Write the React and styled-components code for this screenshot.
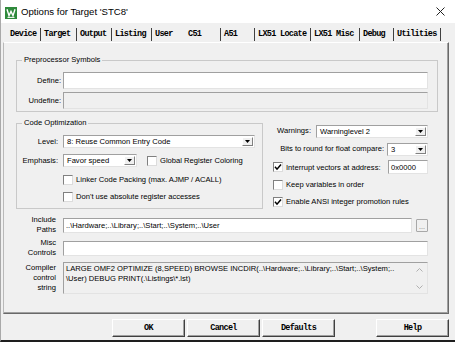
import React from "react";
import styled, { createGlobalStyle } from "styled-components";

const SANS = `"Liberation Sans", Arial, sans-serif`;
const MONO = `"Liberation Mono", "Courier New", monospace`;

const GlobalStyle = createGlobalStyle`
  html, body {
    margin: 0;
    padding: 0;
    background: #f0f0f0;
  }
  body {
    font-family: ${SANS};
    font-size: 7.6px;
    color: #000;
  }
`;

const Window = styled.div`
  width: 455px;
  height: 342px;
  box-sizing: border-box;
  border-left: 1px solid #a9a9a9;
  border-bottom: 2px solid #1e1e1e;
  background: #f0f0f0;
  display: flex;
  flex-direction: column;
  overflow: hidden;
`;

const TitleBar = styled.div`
  flex: none;
  height: 23px;
  background: #ffffff;
  display: flex;
  align-items: center;
  padding-left: 4px;
`;

const TitleText = styled.span`
  margin-left: 4px;
  font-family: ${SANS};
  font-size: 9.6px;
  color: #000;
`;

const CloseButton = styled.div`
  margin-left: auto;
  margin-right: 10px;
  width: 9px;
  height: 9px;
  display: flex;
`;

const TabStrip = styled.div`
  flex: none;
  height: 19px;
  box-sizing: border-box;
  display: flex;
  align-items: flex-end;
  padding: 0 0 1px 6px;
`;

const Tab = styled.div`
  flex: none;
  width: ${(p) => p.$w}px;
  height: 13px;
  box-sizing: border-box;
  padding-left: ${(p) => (p.$active ? 8 : 3)}px;
  border-right: 1px solid ${(p) => (p.$sep ? "#404040" : "transparent")};
  font-family: ${MONO};
  font-weight: bold;
  font-size: 8.5px;
  letter-spacing: -0.7px;
  line-height: 13px;
  white-space: nowrap;
  color: #000;
`;

const Panel = styled.div`
  flex: none;
  margin-left: 2px;
  width: 446px;
  height: 272px;
  box-sizing: border-box;
  border-left: 1px solid #b9b9b9;
  border-top: 1px solid #ffffff;
  border-right: 1px solid #696969;
  border-bottom: 1px solid #696969;
  box-shadow: inset -1px -1px 0 #a0a0a0;
  display: flex;
  flex-direction: column;
`;

const GroupBox = styled.fieldset`
  margin: 0;
  width: ${(p) => p.$w}px;
  min-width: 0;
  box-sizing: border-box;
  padding: 7px ${(p) => p.$pr || 0}px ${(p) => p.$pb || 2}px 0;
  border: 1px solid #c9c9c9;
  flex: none;
`;

const Legend = styled.legend`
  padding: 0 2px;
  margin-left: 5px;
  line-height: 10px;
  font-size: 7.6px;
`;

const Preprocessor = styled(GroupBox)`
  margin: 12px 0 0 12px;
`;

const Row = styled.div`
  display: flex;
  align-items: center;
  height: ${(p) => p.$h}px;
  margin-top: ${(p) => p.$mt || 0}px;
  padding-left: ${(p) => p.$pl || 0}px;
`;

const Label = styled.div`
  flex: none;
  width: ${(p) => p.$w}px;
  margin-right: ${(p) => p.$gap}px;
  text-align: right;
  line-height: 10px;
  white-space: nowrap;
`;

const TextBox = styled.div`
  flex: ${(p) => (p.$w ? "none" : "1")};
  width: ${(p) => (p.$w ? `${p.$w}px` : "auto")};
  height: ${(p) => p.$h}px;
  margin-left: ${(p) => (p.$push ? "auto" : "0")};
  box-sizing: border-box;
  background: ${(p) => (p.$disabled ? "#f0f0f0" : "#ffffff")};
  border-top: 1px solid #a0a0a0;
  border-left: 1px solid #a0a0a0;
  border-right: 1px solid #e3e3e3;
  border-bottom: 1px solid #e3e3e3;
  padding-left: 2px;
  display: flex;
  align-items: center;
  white-space: nowrap;
  overflow: hidden;
`;

const Middle = styled.div`
  display: flex;
  align-items: flex-start;
  margin: 6px 0 0 12px;
`;

const ComboBox = styled.div`
  flex: none;
  width: ${(p) => p.$w}px;
  height: 13px;
  box-sizing: border-box;
  background: #ffffff;
  border-top: 1px solid #a0a0a0;
  border-left: 1px solid #a0a0a0;
  border-right: 1px solid #e3e3e3;
  border-bottom: 1px solid #e3e3e3;
  display: flex;
  align-items: center;
`;

const ComboText = styled.span`
  flex: 1;
  padding-left: 3px;
  white-space: nowrap;
  overflow: hidden;
`;

const DropButton = styled.span`
  flex: none;
  width: 11px;
  height: 9px;
  margin-right: 1px;
  box-sizing: border-box;
  background: #f0f0f0;
  border-top: 1px solid #ffffff;
  border-left: 1px solid #ffffff;
  border-right: 1px solid #808080;
  border-bottom: 1px solid #808080;
  display: flex;
  align-items: center;
  justify-content: center;
`;

const CheckItem = styled.div`
  display: flex;
  align-items: center;
  margin-left: ${(p) => p.$ml || 0}px;
  white-space: nowrap;
`;

const Box = styled.span`
  flex: none;
  width: 10px;
  height: 10px;
  box-sizing: border-box;
  background: #ffffff;
  border-top: 1px solid #808080;
  border-left: 1px solid #808080;
  border-right: 1px solid #dcdcdc;
  border-bottom: 1px solid #dcdcdc;
  margin-right: 3px;
  display: flex;
  align-items: center;
  justify-content: center;
`;

const RightColumn = styled.div`
  flex: 1;
  padding: 4px 20px 0 10px;
  display: flex;
  flex-direction: column;
`;

const RightRow = styled.div`
  height: ${(p) => p.$h}px;
  display: flex;
  align-items: center;
  justify-content: ${(p) => (p.$end ? "flex-end" : "flex-start")};
`;

const Bottom = styled.div`
  margin: 5px 20px 0 12px;
  display: flex;
  flex-direction: column;
`;

const BrowseButton = styled.div`
  flex: none;
  width: 12px;
  height: 13px;
  margin-left: 4px;
  box-sizing: border-box;
  background: #f0f0f0;
  border: 1px solid #a8a8a8;
  border-radius: 1px;
  color: #707070;
  font-size: 7px;
  line-height: 13px;
  text-align: center;
`;

const ControlText = styled.div`
  flex: 1;
  align-self: flex-start;
  padding-top: 1px;
  line-height: 10px;
  white-space: nowrap;
`;

const ScrollTrack = styled.div`
  flex: none;
  width: 15px;
  align-self: stretch;
  display: flex;
  flex-direction: column;
  align-items: center;
  justify-content: space-between;
  padding: 5px 0 4px;
  box-sizing: border-box;
`;

const Footer = styled.div`
  flex: 1;
  display: flex;
  align-items: flex-start;
  gap: 2px;
  padding: 5px 6px 0 111px;
`;

const DialogButton = styled.div`
  width: 73px;
  height: 18px;
  margin-left: ${(p) => (p.$apart ? "auto" : "0")};
  box-sizing: border-box;
  background: #f0f0f0;
  border-top: 1px solid #ffffff;
  border-left: 1px solid #ffffff;
  border-right: 1px solid #404040;
  border-bottom: 1px solid #404040;
  box-shadow: inset -1px -1px 0 #a0a0a0;
  display: flex;
  align-items: center;
  justify-content: center;
  font-family: ${MONO};
  font-weight: bold;
  font-size: 8.5px;
  letter-spacing: -0.7px;
`;

const tabs = [
  { name: "Device", w: 34, sep: true },
  { name: "Target", w: 36, sep: true },
  { name: "Output", w: 35, sep: true },
  { name: "Listing", w: 40, sep: true },
  { name: "User", w: 28, sep: false },
  { name: "C51", w: 41, sep: true, active: true },
  { name: "A51", w: 34, sep: true },
  { name: "LX51 Locate", w: 56, sep: true },
  { name: "LX51 Misc", w: 49, sep: true },
  { name: "Debug", w: 34, sep: true },
  { name: "Utilities", w: 47, sep: true },
];

const AppIcon = () => (
  <svg width="12" height="12" viewBox="0 0 12 12" style={{ marginTop: 2 }}>
    <rect width="12" height="12" fill="#2f8a3c" />
    <path d="M2 2.2 L4 8.6 L6 4.4 L8 8.6 L10 2.2" stroke="#fff" strokeWidth="1.4" fill="none" />
    <path d="M2.5 10.4 H9.5" stroke="#fff" strokeWidth="1" />
  </svg>
);

const Arrow = () => (
  <svg width="5" height="3" viewBox="0 0 5 3">
    <path d="M0 0 H5 L2.5 3 Z" fill="#000" />
  </svg>
);

const Check = () => (
  <svg width="8" height="8" viewBox="0 0 8 8">
    <path d="M1 3.8 L3 6.2 L7 1.4" stroke="#000" strokeWidth="1.5" fill="none" />
  </svg>
);

const Chevron = ({ up }) => (
  <svg width="7" height="4" viewBox="0 0 7 4">
    <path d={up ? "M0.5 3.5 L3.5 0.5 L6.5 3.5" : "M0.5 0.5 L3.5 3.5 L6.5 0.5"} stroke="#b0b0b0" strokeWidth="1" fill="none" />
  </svg>
);

const Combo = ({ w, value }) => (
  <ComboBox $w={w}>
    <ComboText>{value}</ComboText>
    <DropButton>
      <Arrow />
    </DropButton>
  </ComboBox>
);

const CheckOption = ({ checked, label, ml }) => (
  <CheckItem $ml={ml}>
    <Box>{checked && <Check />}</Box>
    {label}
  </CheckItem>
);

export default function App() {
  return (
    <>
      <GlobalStyle />
      <Window>
        <TitleBar>
          <AppIcon />
          <TitleText>Options for Target 'STC8'</TitleText>
          <CloseButton>
            <svg width="9" height="9" viewBox="0 0 9 9">
              <path d="M0.5 0.5 L8.5 8.5 M8.5 0.5 L0.5 8.5" stroke="#222" strokeWidth="1" />
            </svg>
          </CloseButton>
        </TitleBar>

        <TabStrip>
          {tabs.map((t) => (
            <Tab key={t.name} $w={t.w} $sep={t.sep} $active={t.active}>
              {t.name}
            </Tab>
          ))}
        </TabStrip>

        <Panel>
          <Preprocessor $w={422} $pr={9}>
            <Legend>Preprocessor Symbols</Legend>
            <Row $h={17}>
              <Label $w={44} $gap={2}>Define:</Label>
              <TextBox $h={17} />
            </Row>
            <Row $h={17} $mt={3}>
              <Label $w={44} $gap={2}>Undefine:</Label>
              <TextBox $h={17} $disabled />
            </Row>
          </Preprocessor>

          <Middle>
            <GroupBox $w={247} $pb={3}>
              <Legend>Code Optimization</Legend>
              <Row $h={13}>
                <Label $w={41} $gap={5}>Level:</Label>
                <Combo w={192} value="8: Reuse Common Entry Code" />
              </Row>
              <Row $h={13} $mt={6}>
                <Label $w={41} $gap={5}>Emphasis:</Label>
                <Combo w={74} value="Favor speed" />
                <CheckOption ml={10} label="Global Register Coloring" />
              </Row>
              <Row $h={17} $mt={4} $pl={46}>
                <CheckOption label="Linker Code Packing (max. AJMP / ACALL)" />
              </Row>
              <Row $h={17} $pl={46}>
                <CheckOption label="Don't use absolute register accesses" />
              </Row>
            </GroupBox>

            <RightColumn>
              <RightRow $h={18} $end>
                <Label $gap={5}>Warnings:</Label>
                <Combo w={112} value="Warninglevel 2" />
              </RightRow>
              <RightRow $h={18} $end>
                <Label $gap={3}>Bits to round for float compare:</Label>
                <Combo w={41} value="3" />
              </RightRow>
              <RightRow $h={18}>
                <CheckOption checked label="Interrupt vectors at address:" />
                <TextBox $h={14} $w={40} $push>0x0000</TextBox>
              </RightRow>
              <RightRow $h={17}>
                <CheckOption label="Keep variables in order" />
              </RightRow>
              <RightRow $h={17}>
                <CheckOption checked label="Enable ANSI integer promotion rules" />
              </RightRow>
            </RightColumn>
          </Middle>

          <Bottom>
            <Row $h={20}>
              <Label $w={40} $gap={7}>
                Include
                <br />
                Paths
              </Label>
              <TextBox $h={15}>..\Hardware;..\Library;..\Start;..\System;..\User</TextBox>
              <BrowseButton>...</BrowseButton>
            </Row>
            <Row $h={20} $mt={3}>
              <Label $w={40} $gap={7}>
                Misc
                <br />
                Controls
              </Label>
              <TextBox $h={15} />
            </Row>
            <Row $h={32} $mt={4}>
              <Label $w={40} $gap={7}>
                Compiler
                <br />
                control
                <br />
                string
              </Label>
              <TextBox $h={32} $disabled>
                <ControlText>
                  LARGE OMF2 OPTIMIZE (8,SPEED) BROWSE INCDIR(..\Hardware;..\Library;..\Start;..\System;..
                  <br />
                  \User) DEBUG PRINT(.\Listings\*.lst)
                </ControlText>
                <ScrollTrack>
                  <Chevron up />
                  <Chevron />
                </ScrollTrack>
              </TextBox>
            </Row>
          </Bottom>
        </Panel>

        <Footer>
          <DialogButton>OK</DialogButton>
          <DialogButton>Cancel</DialogButton>
          <DialogButton>Defaults</DialogButton>
          <DialogButton $apart>Help</DialogButton>
        </Footer>
      </Window>
    </>
  );
}
